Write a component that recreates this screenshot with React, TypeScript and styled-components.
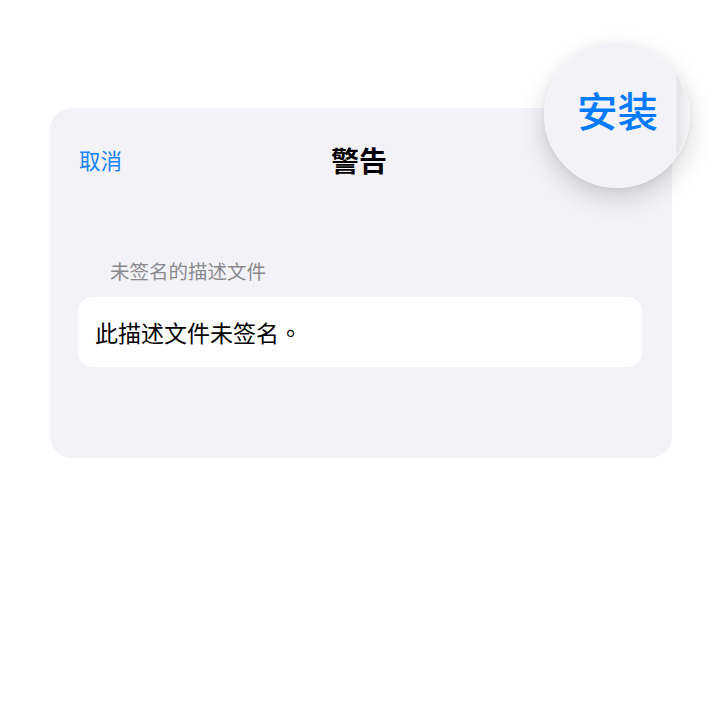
import React from "react";
import styled, { createGlobalStyle } from "styled-components";

const Global = createGlobalStyle`
  html, body { margin: 0; padding: 0; background: #ffffff; }
  body { font-family: "Noto Sans CJK SC", "Noto Sans", sans-serif; }
`;

const Page = styled.div`
  position: relative;
  width: 720px;
  height: 721px;
  padding: 108px 0 0 50px;
  box-sizing: border-box;
  background: #ffffff;
`;

const Card = styled.div`
  width: 622px;
  height: 350px;
  background: #f2f2f7;
  border-radius: 22px;
  box-sizing: border-box;
  padding: 0 30px 0 28px;
  display: flex;
  flex-direction: column;
`;

const NavBar = styled.div`
  height: 104px;
  display: grid;
  grid-template-columns: 1fr auto 1fr;
  align-items: center;
`;

const NavButton = styled.span`
  font-size: 21.5px;
  color: #1a84ff;
  line-height: 1;
  justify-self: start;
  margin-left: 1px;
`;

const Title = styled.span`
  font-size: 28px;
  font-weight: 700;
  color: #000000;
  line-height: 1;
  margin-right: 2px;
`;

const SectionHeader = styled.div`
  margin-top: 49px;
  padding-left: 32px;
  font-size: 19.5px;
  color: #8a8a8e;
  line-height: 20px;
`;

const Row = styled.div`
  margin-top: 16px;
  height: 70px;
  background: #ffffff;
  border-radius: 14px;
  display: flex;
  align-items: center;
  padding-left: 17px;
  font-size: 23px;
  color: #000000;
`;

const Period = styled.span`
  font-family: "Noto Sans CJK TC", "Noto Sans CJK SC", sans-serif;
`;

const Magnifier = styled.div`
  position: absolute;
  left: 544px;
  top: 42px;
  width: 146px;
  height: 146px;
  border-radius: 50%;
  box-sizing: border-box;
  background: linear-gradient(
    to right,
    #f2f2f7 0,
    #f2f2f7 131px,
    #e4e4e7 132px,
    #f7f7f8 146px
  );
  border: 1.5px solid #f6f6f9;
  box-shadow: 0 10px 26px rgba(0, 0, 0, 0.16), 0 2px 6px rgba(0, 0, 0, 0.05);
  display: flex;
  align-items: center;
  justify-content: center;
  padding-left: 1px;
  padding-bottom: 10px;
`;

const MagnifiedText = styled.span`
  font-size: 40.5px;
  font-weight: 500;
  color: #007aff;
  line-height: 1;
`;

export default function App() {
  return (
    <>
      <Global />
      <Page>
        <Card>
          <NavBar>
            <NavButton>取消</NavButton>
            <Title>警告</Title>
            <span />
          </NavBar>
          <SectionHeader>未签名的描述文件</SectionHeader>
          <Row>
            此描述文件未签名<Period>。</Period>
          </Row>
        </Card>
        <Magnifier>
          <MagnifiedText>安装</MagnifiedText>
        </Magnifier>
      </Page>
    </>
  );
}
